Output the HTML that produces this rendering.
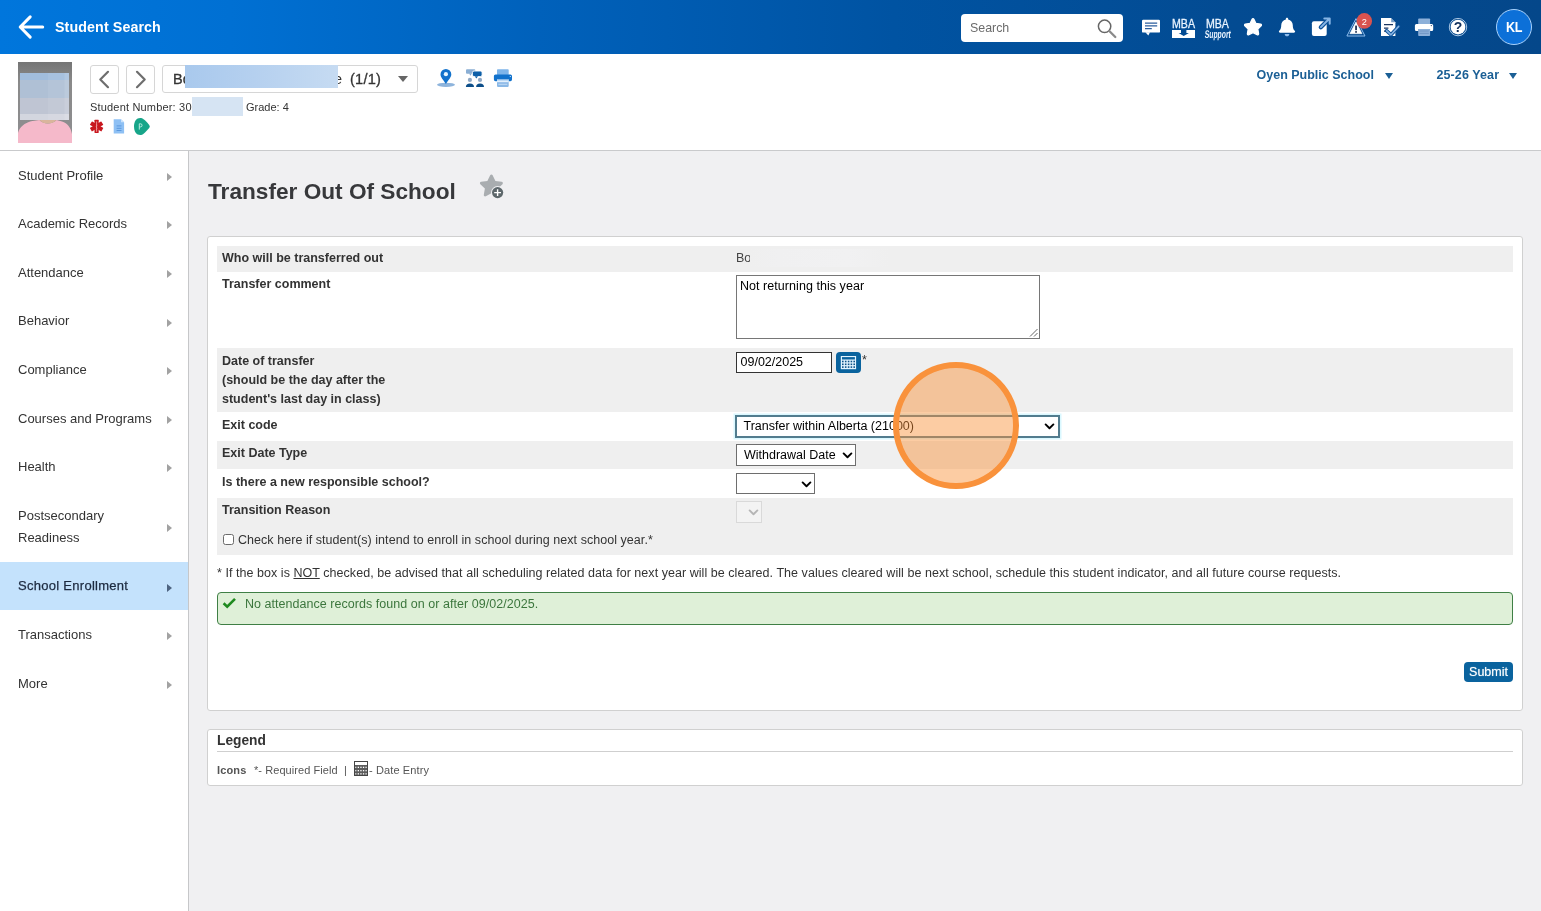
<!DOCTYPE html>
<html>
<head>
<meta charset="utf-8">
<title>Transfer Out Of School</title>
<style>
*{box-sizing:border-box;}
html,body{margin:0;padding:0;}
body{width:1541px;height:911px;overflow:hidden;background:#f0f0f2;font-family:"Liberation Sans",sans-serif;color:#333;position:relative;}
#wrap{position:absolute;left:0;top:0;width:1541px;height:911px;overflow:hidden;will-change:opacity;}
.lbl,.txt,.fld span,.sm,.sch,#hdr .title,#search span,#avatar b,#stusel>div,.gs{will-change:opacity;}
.abs{position:absolute;}
svg{display:block;overflow:visible;}
/* ---------- top header ---------- */
#hdr{position:absolute;left:0;top:0;width:1541px;height:54px;background:linear-gradient(90deg,#0076dc 0%,#0070d3 15%,#0061bb 35%,#0053a2 58%,#034b92 80%,#04478a 100%);}
#hdr .title{position:absolute;left:55px;top:19px;letter-spacing:0.1px;font-size:14.25px;line-height:17px;font-weight:bold;color:#fff;white-space:nowrap;}
#search{position:absolute;left:961px;top:14px;width:162px;height:28px;background:#fff;border-radius:4px;}
#search span{position:absolute;left:9px;top:7px;font-size:12.4px;line-height:15px;color:#6b6b6b;}
#avatar{position:absolute;left:1496px;top:9px;width:36px;height:36px;border-radius:50%;background:#0c70d8;border:1px solid #a9d2fb;color:#fff;font-weight:bold;font-size:14px;letter-spacing:-0.4px;text-align:center;line-height:35px;}
#avatar b{display:inline-block;transform:scaleX(0.9);}
/* ---------- student bar ---------- */
#sbar{position:absolute;left:0;top:54px;width:1541px;height:97px;background:#fff;border-bottom:1px solid #c9cacc;}
.navbtn{position:absolute;top:11px;width:29px;height:29px;border:1px solid #d6d6d6;border-radius:3px;background:#fff;}
#stusel{position:absolute;left:162px;top:11px;width:256px;height:28px;border:1px solid #d6d6d6;border-radius:3px;background:#fff;}
.sm{position:absolute;font-size:11px;line-height:14px;color:#333;white-space:nowrap;}
.sch{position:absolute;font-size:12.5px;line-height:15px;font-weight:bold;color:#1b5f95;white-space:nowrap;}
.caret{position:absolute;width:0;height:0;border-left:4.5px solid transparent;border-right:4.5px solid transparent;border-top:6px solid #1b5f95;}
/* ---------- sidebar ---------- */
#side{position:absolute;left:0;top:151px;width:189px;height:760px;background:#fff;border-right:1px solid #c6c7c9;}
#side .it{position:relative;height:48.6px;padding:13.7px 0 0 18px;font-size:13px;line-height:22px;color:#333;white-space:nowrap;}
#side .it.two{height:70.6px;}
#side .it.sel{background:#c4e2fc;letter-spacing:0.28px;color:#1d2b40;-webkit-text-stroke:0.25px #1d2b40;}
#side .it:after{content:"";position:absolute;left:167px;top:50%;margin-top:-2.5px;border-left:5px solid #a2a2a2;border-top:4px solid transparent;border-bottom:4px solid transparent;}
#side .it.sel:after{border-left-color:#4d6380;}
/* ---------- main ---------- */
#h1{position:absolute;left:208px;top:177px;font-size:22.65px;font-weight:bold;color:#37383b;white-space:nowrap;line-height:28px;}
#panel{position:absolute;left:207px;top:236px;width:1316px;height:475px;background:#fff;border:1px solid #d0d0d0;border-radius:3px;}
.row{position:absolute;left:9px;width:1296px;}
.row.g{background:#efefef;}
.lbl{position:absolute;left:5px;font-size:12.5px;font-weight:bold;color:#333;line-height:19px;white-space:nowrap;}
.txt{position:absolute;font-size:12.5px;line-height:19px;color:#333;white-space:nowrap;}
.fld{position:absolute;background:#fff;border:1px solid #6e6e6e;font-size:12.5px;line-height:15px;color:#000;white-space:nowrap;}
.fld span{position:absolute;left:6px;top:2px;}
.chev{position:absolute;}
#legend{position:absolute;left:207px;top:729px;width:1316px;height:57px;background:#fff;border:1px solid #d0d0d0;border-radius:3px;}
#ring{position:absolute;left:893px;top:362px;width:125.6px;height:126.5px;border-radius:50%;border:6px solid #f9923c;background:rgba(249,146,60,0.47);}
</style>
</head>
<body>
<div id="wrap">

<!-- ================= HEADER ================= -->
<div id="hdr">
  <svg class="abs" style="left:17px;top:13px" width="30" height="28" viewBox="0 0 30 28"><path d="M25.7 14H3.6M13.2 3.9L3.2 14L13.2 24.1" fill="none" stroke="#fff" stroke-width="3" stroke-linecap="round" stroke-linejoin="round"/></svg>
  <div class="title">Student Search</div>
  <div id="search"><span>Search</span>
    <svg class="abs" style="left:135px;top:4px" width="22" height="22" viewBox="0 0 22 22"><circle cx="8.6" cy="8.3" r="6.2" fill="none" stroke="#666" stroke-width="1.5"/><path d="M13.3 13L19.3 19" stroke="#8a8a8a" stroke-width="2.3" stroke-linecap="round"/></svg>
  </div>
  
  <div id="avatar"><b>KL</b></div>
</div>

<!-- ================= STUDENT BAR ================= -->
<div id="sbar">
  
  <div class="navbtn" style="left:90px"><svg class="abs" style="left:0;top:0" width="27" height="27" viewBox="0 0 27 27"><path d="M17 5.8L9.3 13.5L17 21.2" fill="none" stroke="#6e6e6e" stroke-width="2.2" stroke-linecap="round" stroke-linejoin="round"/></svg></div>
  <div class="navbtn" style="left:126px"><svg class="abs" style="left:0;top:0" width="27" height="27" viewBox="0 0 27 27"><path d="M10 5.8L17.7 13.5L10 21.2" fill="none" stroke="#6e6e6e" stroke-width="2.2" stroke-linecap="round" stroke-linejoin="round"/></svg></div>
  <div id="stusel">
    <div class="abs" style="left:10px;top:5px;font-size:14.5px;line-height:17px;color:#333;-webkit-text-stroke:0.3px #333;">Bo</div>
    <div class="abs" style="left:22px;top:-1px;width:153px;height:22.5px;background:linear-gradient(90deg,#a9c9ed 0%,#b5d0ef 45%,#c6dbf2 100%);"></div>
    <div class="abs" style="left:175px;top:5px;font-size:14.5px;line-height:17px;color:#333;width:4px;overflow:hidden;direction:rtl;">e</div>
    <div class="abs" style="left:187px;top:5px;font-size:14.6px;line-height:17px;color:#333;letter-spacing:0.2px;-webkit-text-stroke:0.3px #333;">(1/1)</div>
    <div class="abs" style="left:235.2px;top:10.3px;width:0;height:0;border-left:5px solid transparent;border-right:5px solid transparent;border-top:6px solid #666;"></div>
  </div>
  
  <div class="sm" style="left:90px;top:46px;letter-spacing:0.18px;">Student Number: 30</div>
  <div class="abs" style="left:192px;top:43px;width:51px;height:19px;background:#d6e4f3;"></div>
  <div class="sm" style="left:246px;top:46px;">Grade: 4</div>
  <div class="sch" style="left:1256.5px;top:14px;">Oyen Public School</div>
  <div class="caret" style="left:1384.7px;top:18.5px;"></div>
  <div class="sch" style="left:1436.5px;top:14px;letter-spacing:0.1px;">25-26 Year</div>
  <div class="caret" style="left:1508.6px;top:18.5px;"></div>
</div>

<!-- ================= SIDEBAR ================= -->
<div id="side">
  <div class="it">Student Profile</div>
  <div class="it">Academic Records</div>
  <div class="it">Attendance</div>
  <div class="it">Behavior</div>
  <div class="it">Compliance</div>
  <div class="it">Courses and Programs</div>
  <div class="it">Health</div>
  <div class="it two">Postsecondary<br>Readiness</div>
  <div class="it sel">School Enrollment</div>
  <div class="it">Transactions</div>
  <div class="it">More</div>
</div>

<!-- ================= MAIN ================= -->
<div id="h1">Transfer Out Of School</div>


<div id="panel">
  <div class="row g" style="top:9px;height:26px"><div class="lbl" style="top:3px">Who will be transferred out</div><div class="txt" style="left:519px;top:3px;color:#444">Bo</div><div class="abs" style="left:533px;top:3px;width:140px;height:18px;background:linear-gradient(90deg,#efefef 0,#f0f0f1 20%,#f1f1f2 70%,#efefef 100%);"></div></div>
  <div class="row" style="top:35px;height:76px"><div class="lbl" style="top:3px">Transfer comment</div>
    <div class="fld" style="left:519px;top:3px;width:304px;height:64px;border-color:#767676"><span style="left:3px;top:3px;letter-spacing:0.05px">Not returning this year</span>
      <svg class="abs" style="right:1px;bottom:1px" width="9" height="9" viewBox="0 0 9 9"><path d="M8.5 1L1 8.5M8.5 5L5 8.5" stroke="#666" stroke-width="1" fill="none"/></svg>
    </div>
  </div>
  <div class="row g" style="top:111px;height:64px"><div class="lbl" style="top:4px">Date of transfer<br>(should be the day after the<br>student's last day in class)</div>
    <div class="fld" style="left:519px;top:4px;width:96px;height:21px;border-color:#333"><span style="left:3.5px;top:2px">09/02/2025</span></div>
    
    <div class="txt" style="left:645px;top:3px;font-size:12.5px;">*</div>
  </div>
  <div class="row" style="top:175px;height:29px"><div class="lbl" style="top:4px">Exit code</div>
    <div class="fld" style="left:518px;top:3px;width:325px;height:23px;border:2px solid #527c8e;box-shadow:0 0 0 1.5px rgba(205,245,255,0.75);"><span style="left:6.5px;top:2px">Transfer within Alberta (21000)</span>
      <svg class="chev" style="left:307px;top:5.5px" width="11" height="7" viewBox="0 0 11 7"><path d="M1.6 1.4L5.5 5.2L9.4 1.4" fill="none" stroke="#000" stroke-width="1.9" stroke-linecap="round" stroke-linejoin="round"/></svg>
    </div>
  </div>
  <div class="row g" style="top:204px;height:28px"><div class="lbl" style="top:3px">Exit Date Type</div>
    <div class="fld" style="left:519px;top:3px;width:120px;height:22px"><span style="left:7px;top:3px">Withdrawal Date</span>
      <svg class="chev" style="left:105px;top:7px" width="11" height="7" viewBox="0 0 11 7"><path d="M1.6 1.4L5.5 5.2L9.4 1.4" fill="none" stroke="#000" stroke-width="1.9" stroke-linecap="round" stroke-linejoin="round"/></svg>
    </div>
  </div>
  <div class="row" style="top:232px;height:29px"><div class="lbl" style="top:4px">Is there a new responsible school?</div>
    <div class="fld" style="left:519px;top:4px;width:79px;height:21px">
      <svg class="chev" style="left:63.5px;top:6.5px" width="11" height="7" viewBox="0 0 11 7"><path d="M1.6 1.4L5.5 5.2L9.4 1.4" fill="none" stroke="#000" stroke-width="1.9" stroke-linecap="round" stroke-linejoin="round"/></svg>
    </div>
  </div>
  <div class="row g" style="top:261px;height:56.5px"><div class="lbl" style="top:3px">Transition Reason</div>
    <div class="fld" style="left:519px;top:3px;width:26px;height:22px;border-color:#d9d9d9;background:#f3f3f3">
      <svg class="chev" style="left:11px;top:7px" width="11" height="7" viewBox="0 0 11 7"><path d="M1.6 1.4L5.5 5.2L9.4 1.4" fill="none" stroke="#b5b5b5" stroke-width="1.9" stroke-linecap="round" stroke-linejoin="round"/></svg>
    </div>
    <div class="abs" style="left:5.5px;top:36px;width:11px;height:11px;border:1px solid #6b6b6b;border-radius:2.5px;background:#fff;"></div>
    <div class="txt" style="left:21px;top:33px;letter-spacing:0.045px;">Check here if student(s) intend to enroll in school during next school year.*</div>
  </div>
  <div class="txt" style="left:9px;top:327px;letter-spacing:0.045px;">* If the box is <u>NOT</u> checked, be advised that all scheduling related data for next year will be cleared. The values cleared will be next school, schedule this student indicator, and all future course requests.</div>
  <div class="abs" style="left:9px;top:355px;width:1296px;height:33px;background:#dff0d8;border:1px solid #3f7f45;border-radius:4px;">
    <svg class="abs" style="left:4px;top:4px" width="15" height="12" viewBox="0 0 15 12"><path d="M1.6 6.2L5.2 9.6L13 1.8" fill="none" stroke="#1f8a1f" stroke-width="2.6" stroke-linejoin="miter"/></svg>
    <div class="txt" style="left:27px;top:1.5px;color:#3c763d;letter-spacing:0.04px;">No attendance records found on or after 09/02/2025.</div>
  </div>
  <div class="abs" style="left:1256px;top:425px;width:49px;height:20px;background:#0a639e;border-radius:4px;color:#fff;font-size:12.5px;line-height:20px;text-align:center;text-shadow:0 0 1px rgba(255,255,255,0.6);"><span class="gs">Submit</span></div>
</div>

<div id="legend">
  <div class="abs" style="left:9px;top:2px;font-size:13.75px;line-height:18px;font-weight:bold;color:#333;">Legend</div>
  <div class="abs" style="left:9px;top:21px;width:1296px;height:1px;background:#cfcfcf;"></div>
  <div class="abs" style="left:9px;top:33px;font-size:11px;line-height:14px;font-weight:bold;color:#555;letter-spacing:0.15px;">Icons</div>
  <div class="abs" style="left:46px;top:33px;font-size:11px;line-height:14px;color:#555;white-space:nowrap;letter-spacing:0.07px;">*- Required Field</div>
  <div class="abs" style="left:136px;top:33px;font-size:11px;line-height:14px;color:#555;">|</div>
  
  <div class="abs" style="left:161px;top:33px;font-size:11px;line-height:14px;color:#555;white-space:nowrap;letter-spacing:0.12px;">- Date Entry</div>
</div>

<svg id="ico" class="abs" style="left:0;top:0;pointer-events:none" width="1541" height="911" viewBox="0 0 1541 911" font-family="Liberation Sans, sans-serif">
<defs>
  <linearGradient id="pg" x1="0" y1="0" x2="0" y2="1"><stop offset="0" stop-color="#757575"/><stop offset="0.25" stop-color="#8a8a8a"/><stop offset="1" stop-color="#8e8e90"/></linearGradient>
  <path id="fastar" d="M259.3 17.8L194 150.2 47.9 171.5c-26.2 3.8-36.7 36.1-17.7 54.6l105.7 103-25 145.5c-4.5 26.3 23.2 46 46.4 33.7L288 439.6l130.7 68.7c23.2 12.2 50.9-7.4 46.4-33.7l-25-145.5 105.7-103c19-18.5 8.5-50.8-17.7-54.6L382 150.2 316.7 17.8c-11.7-23.6-45.6-23.9-57.4 0z"/>
</defs>

<!-- ===== header icons ===== -->
<!-- chat -->
<g>
  <rect x="1142" y="19.8" width="18" height="12.8" rx="1.2" fill="#fff"/>
  <path d="M1145.4 32.3H1150L1148.3 35.6Z" fill="#fff"/>
  <path d="M1145 23.1H1157.2M1145 25.9H1157.2M1145 28.6H1151.8" stroke="#2c5f9e" stroke-width="1.1" fill="none"/>
</g>
<!-- MBA download -->
<g fill="#eaf4ff">
  <text x="1172" y="27.9" font-size="13.6" textLength="23" lengthAdjust="spacingAndGlyphs" stroke="#eaf4ff" stroke-width="0.3">MBA</text>
  <path fill-rule="evenodd" fill="#fff" d="M1172 29.9H1195V38H1172Z M1181 29.9V33H1178.6L1183.7 36L1188.9 33H1186.4V29.9Z"/>
</g>
<!-- MBA support -->
<g fill="#eaf4ff">
  <text x="1205.9" y="27.9" font-size="13.6" textLength="23" lengthAdjust="spacingAndGlyphs" stroke="#eaf4ff" stroke-width="0.3">MBA</text>
  <g transform="translate(1204.4 37.6) skewX(-5)"><text x="0" y="0" font-size="11.2" font-weight="bold" textLength="26.2" lengthAdjust="spacingAndGlyphs">Support</text></g>
</g>
<!-- star -->
<use href="#fastar" transform="translate(1243.9 18.7) scale(0.0316)" fill="#fff" stroke="#fff" stroke-width="40" stroke-linejoin="round"/>
<!-- bell -->
<g transform="translate(1278.9 17.7) scale(0.0362)">
  <path fill="#8fbcec" d="M224 512c35.32 0 63.97-28.65 63.97-64H160.03c0 35.35 28.65 64 63.97 64z"/>
  <path fill="#fff" d="M439.39 362.29c-19.32-20.76-55.47-51.99-55.47-154.29 0-77.7-54.48-139.9-127.94-155.16V32c0-17.67-14.32-32-31.98-32s-31.98 14.33-31.98 32v20.84C118.56 68.1 64.08 130.3 64.08 208c0 102.3-36.15 133.53-55.47 154.29-6 6.45-8.66 14.16-8.61 21.71.11 16.4 12.98 32 32.1 32h383.8c19.12 0 32-15.6 32.1-32 .05-7.55-2.61-15.27-8.61-21.71z"/>
</g>
<!-- external link -->
<g>
  <rect x="1311.9" y="21.2" width="14.8" height="14.8" rx="2" fill="#fff"/>
  <path d="M1320.8 27.2L1327 21" stroke="#0a4f97" stroke-width="4.2" stroke-linecap="round" fill="none"/>
  <path d="M1320.9 27.1L1329.5 18.5M1324.3 18.5H1329.7V23.8" stroke="#86b4e4" stroke-width="2" stroke-linecap="round" stroke-linejoin="round" fill="none"/>
</g>
<!-- warning + badge -->
<g>
  <path d="M1356 18.6L1365 36H1346.9Z" fill="none" stroke="#8fbcec" stroke-width="1" stroke-linejoin="round"/>
  <path d="M1356 21.8L1362 33.7H1349.9Z" fill="#fff" stroke="#fff" stroke-width="0.6" stroke-linejoin="round"/>
  <rect x="1355.2" y="25.6" width="1.7" height="4.6" fill="#14264a"/>
  <circle cx="1356.05" cy="31.9" r="0.95" fill="#14264a"/>
  <circle cx="1364.3" cy="20.9" r="7.8" fill="#d9534f"/>
  <text x="1364.2" y="24.8" font-size="9.2" fill="#fff" text-anchor="middle">2</text>
</g>
<!-- doc check -->
<g>
  <path d="M1381 18H1391.2L1395.4 22.2V36H1381Z" fill="#fff"/>
  <path d="M1391.2 18V22.2H1395.4Z" fill="#0a4f97" opacity="0.55"/>
  <path d="M1384 24.6H1393M1384 28.1H1388.4M1384 31.2H1386.4" stroke="#1a3560" stroke-width="1.2" fill="none"/>
  <path d="M1386.6 30.7L1391 34.8L1398.7 26.4" stroke="#0a4f97" stroke-width="3.6" fill="none" stroke-linecap="round" stroke-linejoin="round"/>
  <path d="M1386.6 30.7L1391 34.8L1398.7 26.4" stroke="#86b4e4" stroke-width="1.6" fill="none" stroke-linecap="round" stroke-linejoin="round"/>
</g>
<!-- printer (header) -->
<g>
  <rect x="1418.2" y="18.4" width="11.9" height="6.2" rx="0.8" fill="#8db0d9"/>
  <rect x="1418.2" y="28.6" width="11.9" height="7.4" rx="0.8" fill="#8db0d9"/>
  <path d="M1416.4 24H1431.7A1.5 1.5 0 0 1 1433.2 25.5V29.4A1.5 1.5 0 0 1 1431.7 30.9H1430.1V28.9H1418.2V30.9H1416.4A1.5 1.5 0 0 1 1414.9 29.4V25.5A1.5 1.5 0 0 1 1416.4 24Z" fill="#fff"/>
  <path d="M1419.5 31H1428.8M1419.5 33.4H1428.8" stroke="#6e93c2" stroke-width="0.9" fill="none"/>
  <circle cx="1431.3" cy="25.6" r="0.6" fill="#1a3560"/>
</g>
<!-- help -->
<g>
  <circle cx="1458" cy="27.1" r="8.7" fill="none" stroke="#d6e7fa" stroke-width="0.8"/>
  <circle cx="1458" cy="27.1" r="7.4" fill="#fff"/>
  <text x="1458" y="32.2" font-size="14" font-weight="bold" fill="#12305c" text-anchor="middle">?</text>
</g>

<!-- ===== photo ===== -->
<g>
  <rect x="18" y="62" width="54" height="81" fill="url(#pg)"/>
  <path d="M18 143V133C19.5 127 25 123 31 121.3L39.5 120C43 124.5 52.5 124.5 56.5 120L62 121.4C67.5 123 70.8 127.5 72 134V143Z" fill="#f5b9ca"/>
  <path d="M39.5 120C43 124.8 52.5 124.8 56.5 120Z" fill="#d9b59c"/>
  <rect x="20" y="73" width="49" height="7" fill="#a1bddd"/>
  <rect x="20" y="80" width="49" height="18" fill="#afc0d5"/>
  <rect x="20" y="98" width="49" height="16" fill="#bfc5d3"/>
  <rect x="20" y="114" width="49" height="6" fill="#d3d6df"/>
  <rect x="48" y="73" width="21" height="47" fill="#fff" opacity="0.07"/>
  <rect x="64.5" y="73" width="4.5" height="47" fill="#fff" opacity="0.1"/>
</g>

<!-- ===== student bar icons ===== -->
<!-- location -->
<g>
  <ellipse cx="446" cy="84.8" rx="9" ry="2.1" fill="#8eb4dc"/>
  <path d="M445.9 83.9C443.2 79.8 440.5 77.4 440.5 74.3A5.4 5.4 0 0 1 451.3 74.3C451.3 77.4 448.6 79.8 445.9 83.9Z" fill="#1272cc"/>
  <circle cx="445.9" cy="74.2" r="2.1" fill="#e6f6ff"/>
</g>
<!-- group chat -->
<g>
  <rect x="466" y="69.2" width="9.3" height="4.6" rx="1" fill="#8aaed4"/>
  <path d="M468.8 73.6H471.6L470.8 75.7Z" fill="#8aaed4"/>
  <rect x="472.4" y="71" width="9.7" height="5.6" rx="1.7" fill="#0d5fa8" stroke="#fff" stroke-width="0.9"/>
  <path d="M474.8 76.2H478L476.3 78.6Z" fill="#0d5fa8"/>
  <circle cx="469.9" cy="79.9" r="2.1" fill="#8fa8c4"/>
  <circle cx="480" cy="79.9" r="2.1" fill="#8fa8c4"/>
  <path d="M465.9 86.9A4.05 3.5 0 0 1 474 86.9Z" fill="#0d4f8a"/>
  <path d="M476.1 86.9A3.95 3.5 0 0 1 484 86.9Z" fill="#0d4f8a"/>
</g>
<!-- printer blue -->
<g>
  <rect x="497" y="69.2" width="11.7" height="6" rx="0.8" fill="#7fb5ea"/>
  <rect x="497" y="78.8" width="11.7" height="8.1" rx="0.8" fill="#8ab8e6"/>
  <path d="M495.5 74.5H510.4A1.6 1.6 0 0 1 512 76.1V79.6A1.6 1.6 0 0 1 510.4 81.2H508.7V79H497V81.2H495.5A1.6 1.6 0 0 1 493.9 79.6V76.1A1.6 1.6 0 0 1 495.5 74.5Z" fill="#1272cc"/>
  <rect x="497" y="80.4" width="11.7" height="1.8" fill="#e3f0fd"/>
  <path d="M498.4 84.3H507.3" stroke="#c7dff7" stroke-width="0.9"/>
  <circle cx="510.3" cy="76.5" r="0.6" fill="#e6f6ff"/>
</g>
<!-- star of life -->
<g transform="translate(96.6 126.4)" fill="#c8171e">
  <rect x="-2.1" y="-6.6" width="4.2" height="13.2" rx="0.4"/>
  <rect x="-2.1" y="-6.6" width="4.2" height="13.2" rx="0.4" transform="rotate(60)"/>
  <rect x="-2.1" y="-6.6" width="4.2" height="13.2" rx="0.4" transform="rotate(120)"/>
  <path d="M0 -5V5.5" stroke="#ffd9d9" stroke-width="0.7" opacity="0.85"/>
  <path d="M0 -2C1.6 -1.3 -1.6 0.3 0 1.2C1.4 2 -1.2 3 0 4" stroke="#ffd9d9" stroke-width="0.5" fill="none" opacity="0.7"/>
</g>
<!-- doc -->
<g>
  <path d="M113.7 119.2H121L124.1 122.3V133.5H113.7Z" fill="#8ec0f4"/>
  <path d="M121 119.2V122.3H124.1Z" fill="#cbe3fb"/>
  <path d="M116.6 125.9H121.5M116.6 128.3H121.5M116.6 130.5H121.5" stroke="#5a98de" stroke-width="1" fill="none"/>
</g>
<!-- green P -->
<g>
  <path d="M134 126.5C134 121.5 136.5 118.1 140.2 118.1C142.7 118.1 144.6 119.6 149.2 125Q150.4 126.5 149.2 128C144.6 133.4 142.7 135 140.2 135C136.5 135 134 131.5 134 126.5Z" fill="#17a589"/>
  <path d="M139.3 129.6V123.8H140.5A1.55 1.55 0 0 1 140.5 126.9H139.3" stroke="#c6f3e9" stroke-width="0.9" fill="none"/>
</g>

<!-- ===== favourite star ===== -->
<g>
  <use href="#fastar" transform="translate(479.05 174.5) scale(0.0429)" fill="#a9adb0"/>
  <circle cx="497.6" cy="192.6" r="6.6" fill="#f0f0f2"/>
  <circle cx="497.6" cy="192.6" r="5.6" fill="#5d676b"/>
  <path d="M494.2 192.6H501M497.6 189.2V196" stroke="#fff" stroke-width="1.4" fill="none"/>
</g>

<!-- ===== calendar button ===== -->
<g>
  <rect x="836" y="352" width="25" height="21" rx="4" fill="#0a639e"/>
  <rect x="840.8" y="356" width="15.3" height="13.2" fill="#e4f5ff"/>
  <rect x="842" y="357.1" width="12.9" height="2.4" fill="#0a639e"/>
  <g fill="#0d5288">
    <rect x="842.0" y="360.7" width="1.6" height="1.6"/><rect x="844.9" y="360.7" width="1.6" height="1.6"/><rect x="847.8" y="360.7" width="1.6" height="1.6"/><rect x="850.6" y="360.7" width="1.6" height="1.6"/><rect x="853.4" y="360.7" width="1.6" height="1.6"/>
    <rect x="842.0" y="363.5" width="1.6" height="1.6"/><rect x="844.9" y="363.5" width="1.6" height="1.6"/><rect x="847.8" y="363.5" width="1.6" height="1.6"/><rect x="850.6" y="363.5" width="1.6" height="1.6"/><rect x="853.4" y="363.5" width="1.6" height="1.6"/>
    <rect x="842.0" y="366.3" width="1.6" height="1.6"/><rect x="844.9" y="366.3" width="1.6" height="1.6"/><rect x="847.8" y="366.3" width="1.6" height="1.6"/><rect x="850.6" y="366.3" width="1.6" height="1.6"/><rect x="853.4" y="366.3" width="1.6" height="1.6"/>
  </g>
</g>

<!-- ===== legend calendar ===== -->
<g>
  <rect x="354.5" y="761.5" width="13" height="14" fill="#fff" stroke="#444" stroke-width="1"/>
  <rect x="355" y="765" width="12" height="10" fill="#5c5c5c"/>
  <g fill="#fff">
    <rect x="355.3" y="766.7" width="1" height="1.3"/><rect x="357.7" y="766.7" width="1.3" height="1.3"/><rect x="360.3" y="766.7" width="1.3" height="1.3"/><rect x="362.9" y="766.7" width="1.3" height="1.3"/><rect x="365.5" y="766.7" width="1.2" height="1.3"/>
    <rect x="355.3" y="770" width="1" height="1.3"/><rect x="357.7" y="770" width="1.3" height="1.3"/><rect x="360.3" y="770" width="1.3" height="1.3"/><rect x="362.9" y="770" width="1.3" height="1.3"/><rect x="365.5" y="770" width="1.2" height="1.3"/>
    <rect x="355.3" y="773.2" width="1" height="1.3"/><rect x="357.7" y="773.2" width="1.3" height="1.3"/><rect x="360.3" y="773.2" width="1.3" height="1.3"/><rect x="362.9" y="773.2" width="1.3" height="1.3"/><rect x="365.5" y="773.2" width="1.2" height="1.3"/>
  </g>
</g>
</svg>
<div id="ring"></div>

</div>
</body>
</html>
